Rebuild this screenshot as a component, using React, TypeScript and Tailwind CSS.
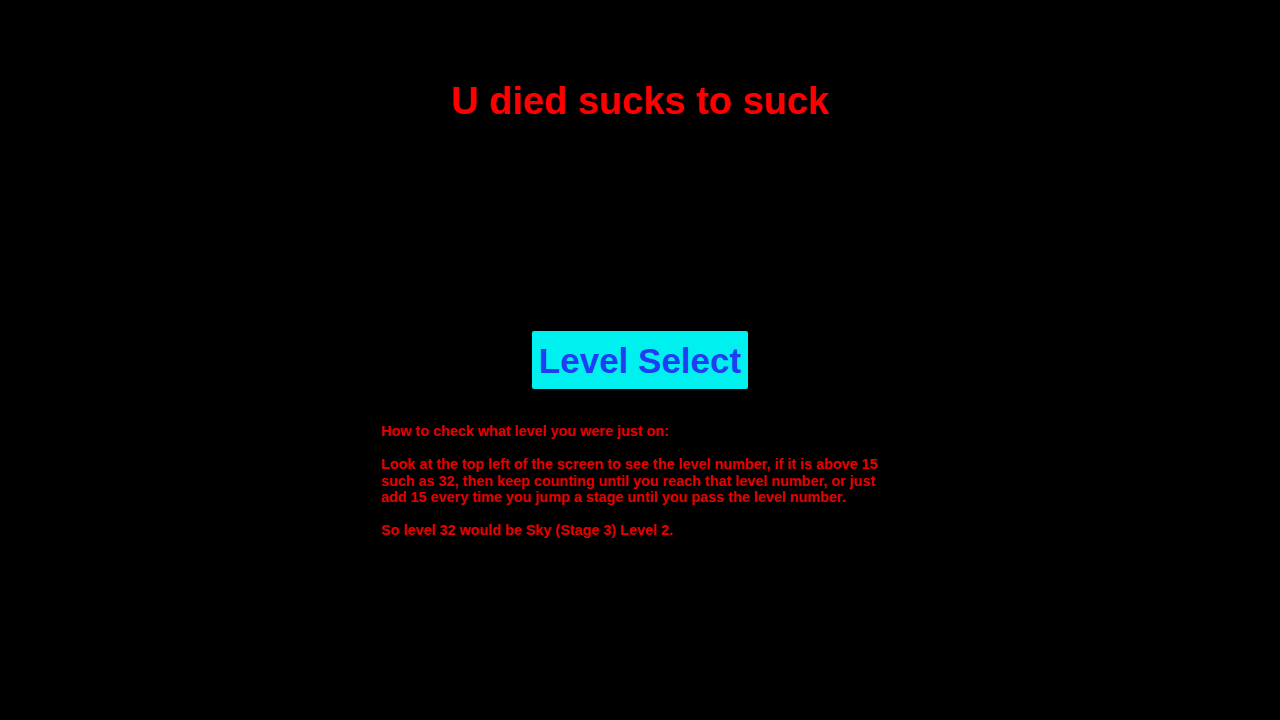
export default function App() {
  return (
    <div className="w-full h-[720px] bg-black flex flex-col items-center text-[#ff0000]" style={{ fontFamily: '"Liberation Sans", Arial, sans-serif' }}>
      <h1 className="mt-[78px] text-[38px] leading-[46px] font-bold">U died sucks to suck</h1>
      <button className="mt-[207px] h-[58px] px-[7px] bg-[#00f0f0] rounded-[2px] text-[#1f3df2] text-[35px] font-bold leading-none">
        Level Select
      </button>
      <div className="mt-[34px] w-[518px] text-[14.4px] leading-[16.5px] font-bold text-[#e60000]">
        <p>How to check what level you were just on:</p>
        <p className="mt-[16.5px]">
          Look at the top left of the screen to see the level number, if it is above 15 such as 32, then keep counting until you reach that level number, or just add 15 every time you jump a stage until you pass the level number.
        </p>
        <p className="mt-[16.5px]">So level 32 would be Sky (Stage 3) Level 2.</p>
      </div>
    </div>
  )
}
